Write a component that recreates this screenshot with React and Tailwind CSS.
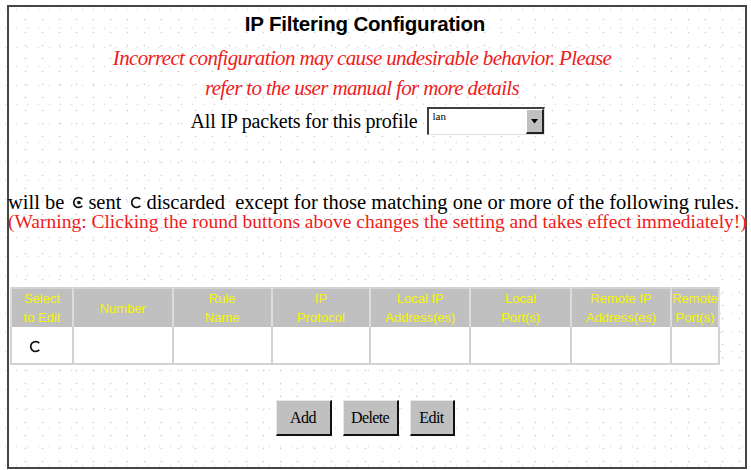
import React from "react";

const Radio = ({ checked }) => (
  <svg width="13" height="13" viewBox="0 0 12 12" className="inline-block">
    <path d="M9.5 2.8 A4.6 4.6 0 1 0 9.5 9.2" fill="none" stroke="#111" strokeWidth="1.6" />
    {checked && <circle cx="6.4" cy="6" r="1.7" fill="#111" />}
  </svg>
);

const cols = [
  { w: "w-[62px]", lines: ["Select", "to Edit"] },
  { w: "w-[100px]", lines: ["Number"] },
  { w: "w-[99px]", lines: ["Rule", "Name"] },
  { w: "w-[99px]", lines: ["IP", "Protocol"] },
  { w: "w-[100px]", lines: ["Local IP", "Address(es)"] },
  { w: "w-[101px]", lines: ["Local", "Port(s)"] },
  { w: "w-[100px]", lines: ["Remote IP", "Address(es)"] },
  { w: "w-[48px]", lines: ["Remote", "Port(s)"] },
];

const Btn = ({ label, w }) => (
  <button
    className={`${w} h-[36px] bg-[#c0c0c0] border-t border-l border-t-[#e8e8e8] border-l-[#e8e8e8] border-r-2 border-b-2 border-r-[#111] border-b-[#111] text-[16px] text-black font-['Liberation_Serif',serif] tracking-[-0.6px]`}
  >
    {label}
  </button>
);

export default function App() {
  return (
    <div className="w-[751px] h-[470px] overflow-hidden bg-white bg-[radial-gradient(circle,#cfcfcf_0.7px,transparent_1.1px),radial-gradient(circle,#dedede_0.7px,transparent_1.1px)] bg-[size:17px_13px,11px_19px] pt-[5px] pl-[7px]">
      <div className="w-[740px] h-[464px] border-t-2 border-l-2 border-r-2 border-b-2 border-[#454545]">
        <div className="w-[710px] ml-[1px] flex flex-col items-center">
          <h1 className="pt-[2px] leading-[30px] text-[20.5px] font-bold text-black font-['Liberation_Sans',Arial,sans-serif] tracking-[-0.2px]">
            IP Filtering Configuration
          </h1>
          <p className="mt-[4px] -ml-[6px] leading-[30px] text-[21px] italic text-[#ee1c1c] text-center font-['Liberation_Serif',serif] tracking-[-0.65px]">
            Incorrect configuration may cause undesirable behavior. Please
            <br />
            refer to the user manual for more details
          </p>
          <div className="mt-[3px] h-[30px] flex items-center gap-[10px] ml-[6px]">
            <span className="text-[20px] text-black font-['Liberation_Serif',serif] tracking-[-0.2px]">
              All IP packets for this profile
            </span>
            <div className="w-[118px] h-[28px] flex border-t-2 border-l-2 border-t-[#404040] border-l-[#404040] border-b border-r border-b-[#e0e0e0] border-r-[#e0e0e0] bg-white">
              <span className="flex-1 pl-[3px] pt-[1px] text-[11px] leading-[12px] text-black font-['Liberation_Serif',serif]">
                lan
              </span>
              <div className="w-[18px] h-full bg-[#c0c0c0] border-t border-l border-t-white border-l-white border-r-2 border-b-2 border-r-[#222] border-b-[#222] flex items-center justify-center">
                <svg width="7" height="5" viewBox="0 0 7 5">
                  <path d="M0 0 H7 L3.5 4.5 Z" fill="#000" />
                </svg>
              </div>
            </div>
          </div>
          <div className="self-start -ml-[2px] mt-[57px] whitespace-nowrap font-['Liberation_Serif',serif]">
            <div className="leading-[19px] text-[20.5px] text-black flex items-center">
              <span>will be</span>
              <span className="ml-[8px] mr-[3px] flex"><Radio checked /></span>
              <span>sent</span>
              <span className="ml-[9px] mr-[3px] flex"><Radio /></span>
              <span>discarded&nbsp; except for those matching one or more of the following rules.</span>
            </div>
            <div className="leading-[19px] text-[19.5px] text-[#ee1c1c]">
              (Warning: Clicking the round buttons above changes the setting and takes effect immediately!)
            </div>
          </div>
          <table className="self-start mt-[56px] border-collapse border-2 border-[#d2d2d2] font-['Liberation_Sans',Arial,sans-serif]">
            <thead>
              <tr className="h-[39px] bg-[#c0c0c0]">
                {cols.map((c, i) => (
                  <th
                    key={i}
                    className={`${c.w} p-0 border-x-2 border-[#dcdcdc] text-[13px] leading-[19px] font-normal text-[#f6f600] text-center whitespace-nowrap`}
                  >
                    {c.lines.map((l, j) => (
                      <div key={j}>{l}</div>
                    ))}
                  </th>
                ))}
              </tr>
            </thead>
            <tbody>
              <tr className="h-[37px] bg-white">
                {cols.map((c, i) => (
                  <td key={i} className="p-0 border-x-2 border-[#d2d2d2]">
                    {i === 0 && (
                      <div className="flex justify-center pr-[12px] pt-[2px]">
                        <Radio />
                      </div>
                    )}
                  </td>
                ))}
              </tr>
            </tbody>
          </table>
          <div className="mt-[35px] flex gap-[11px]">
            <Btn label="Add" w="w-[56px]" />
            <Btn label="Delete" w="w-[56px]" />
            <Btn label="Edit" w="w-[45px]" />
          </div>
        </div>
      </div>
    </div>
  );
}
